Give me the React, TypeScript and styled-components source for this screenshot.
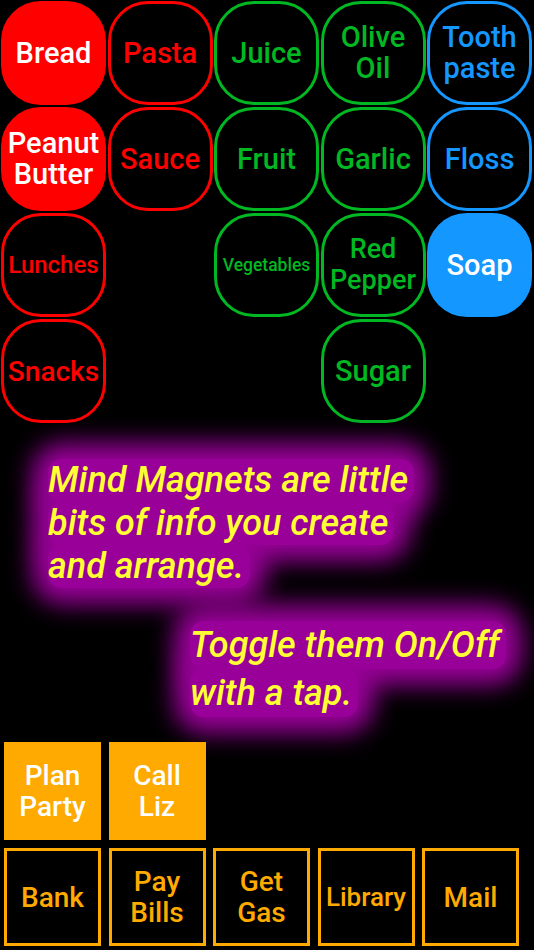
import React from "react";
import styled, { createGlobalStyle } from "styled-components";

const Global = createGlobalStyle`
  html, body { margin: 0; padding: 0; background: #000; }
  body { width: 534px; height: 950px; overflow: hidden; font-family: Roboto, "Noto Sans", sans-serif; }
`;

const Page = styled.div`
  width: 534px;
  height: 950px;
  background: #000;
  display: flex;
  flex-direction: column;
`;

const MagnetGrid = styled.div`
  display: grid;
  grid-template-columns: repeat(5, 105px);
  grid-auto-rows: 104px;
  column-gap: 1.5px;
  row-gap: 2px;
  padding: 1px 0 0 1px;
`;

type TileProps = { $color: string; $filled?: boolean; $size?: number };

const Magnet = styled.div<TileProps>`
  box-sizing: border-box;
  border-radius: 40px;
  border: 3px solid ${(p) => p.$color};
  background: ${(p) => (p.$filled ? p.$color : "transparent")};
  color: ${(p) => (p.$filled ? "#fff" : p.$color)};
  display: flex;
  align-items: center;
  justify-content: center;
  text-align: center;
  font-family: Roboto, sans-serif;
  font-weight: 500;
  font-size: ${(p) => p.$size ?? 29}px;
  line-height: 31px;
  white-space: pre-line;
`;

const Empty = styled.div``;

const Notes = styled.div`
  display: flex;
  flex-direction: column;
  font-family: Roboto, sans-serif;
  font-style: italic;
  font-weight: 500;
  font-size: 36px;
  color: #ffff33;
`;

const Note = styled.div<{ $indent: number; $lh: number; $top: number }>`
  margin: ${(p) => p.$top}px 0 0 ${(p) => p.$indent}px;
  line-height: ${(p) => p.$lh}px;
`;

const Line = styled.div`
  width: fit-content;
  padding: 0 6px 0 0;
  border-radius: 14px;
  background: #990099;
  box-shadow: 0 0 24px 16px #990099;
  white-space: nowrap;
`;

const TaskGrid = styled.div`
  margin-top: auto;
  display: grid;
  grid-template-columns: repeat(5, 97px);
  grid-auto-rows: 98px;
  column-gap: 7.5px;
  row-gap: 8px;
  padding: 0 0 4px 4px;
`;

const Task = styled.div<{ $filled?: boolean; $size?: number }>`
  box-sizing: border-box;
  border: 3px solid #ffaa00;
  background: ${(p) => (p.$filled ? "#ffaa00" : "transparent")};
  color: ${(p) => (p.$filled ? "#fff" : "#ffaa00")};
  display: flex;
  align-items: center;
  justify-content: center;
  text-align: center;
  font-family: Roboto, sans-serif;
  font-weight: 500;
  font-size: ${(p) => p.$size ?? 28}px;
  line-height: 31px;
  white-space: pre-line;
`;

const RED = "#ff0000";
const GREEN = "#00b822";
const BLUE = "#1497ff";

type M = { label: string; color: string; filled?: boolean; size?: number } | null;

const magnets: M[] = [
  { label: "Bread", color: RED, filled: true },
  { label: "Pasta", color: RED },
  { label: "Juice", color: GREEN },
  { label: "Olive\nOil", color: GREEN },
  { label: "Tooth\npaste", color: BLUE },
  { label: "Peanut\nButter", color: RED, filled: true },
  { label: "Sauce", color: RED },
  { label: "Fruit", color: GREEN },
  { label: "Garlic", color: GREEN },
  { label: "Floss", color: BLUE },
  { label: "Lunches", color: RED, size: 24 },
  null,
  { label: "Vegetables", color: GREEN, size: 17.5 },
  { label: "Red\nPepper", color: GREEN, size: 27 },
  { label: "Soap", color: BLUE, filled: true },
  { label: "Snacks", color: RED, size: 28 },
  null,
  null,
  { label: "Sugar", color: GREEN },
  null,
];

const tasks = [
  { label: "Plan\nParty", filled: true },
  { label: "Call\nLiz", filled: true },
  null,
  null,
  null,
  { label: "Bank" },
  { label: "Pay\nBills" },
  { label: "Get\nGas" },
  { label: "Library", size: 26 },
  { label: "Mail" },
];

const notes = [
  { indent: 48, lh: 43, top: 36, lines: ["Mind Magnets are little", "bits of info you create", "and arrange."] },
  { indent: 190, lh: 48, top: 33, lines: ["Toggle them On/Off", "with a tap."] },
];

export default function App() {
  return (
    <Page>
      <Global />
      <MagnetGrid>
        {magnets.map((m, i) =>
          m ? (
            <Magnet key={i} $color={m.color} $filled={m.filled} $size={m.size}>
              {m.label}
            </Magnet>
          ) : (
            <Empty key={i} />
          )
        )}
      </MagnetGrid>
      <Notes>
        {notes.map((n, i) => (
          <Note key={i} $indent={n.indent} $lh={n.lh} $top={n.top}>
            {n.lines.map((l, j) => (
              <Line key={j}>{l}</Line>
            ))}
          </Note>
        ))}
      </Notes>
      <TaskGrid>
        {tasks.map((t, i) =>
          t ? (
            <Task key={i} $filled={t.filled} $size={t.size}>
              {t.label}
            </Task>
          ) : (
            <Empty key={i} />
          )
        )}
      </TaskGrid>
    </Page>
  );
}
